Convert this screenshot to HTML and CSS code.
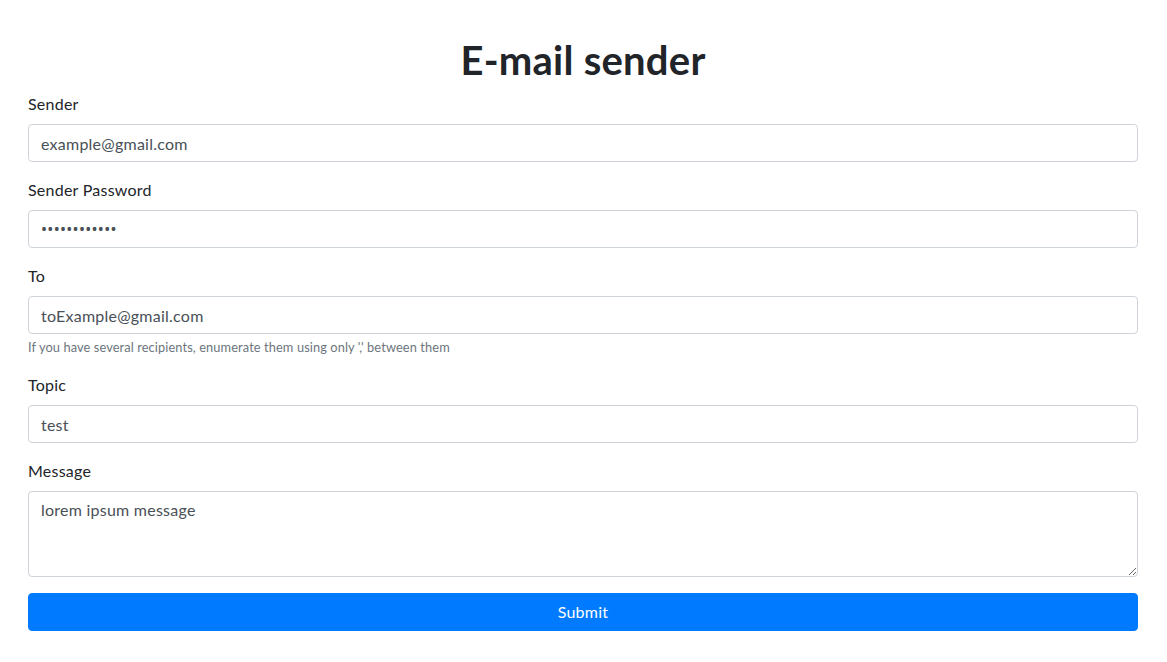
FILE: index.html
```html
<!DOCTYPE html>
<html lang="en">
<head>
<meta charset="utf-8">
<title>E-mail sender</title>
<link rel="stylesheet" href="styles.css">
</head>
<body>
<main class="container">
  <h1 class="title">E-mail sender</h1>
  <form class="form">
    <div class="form-group">
      <label class="label" for="sender">Sender</label>
      <input class="control" id="sender" type="email" value="example@gmail.com">
    </div>
    <div class="form-group">
      <label class="label" for="pass">Sender Password</label>
      <input class="control password" id="pass" type="password" value="abcdefghijkl">
    </div>
    <div class="form-group">
      <label class="label" for="to">To</label>
      <input class="control" id="to" type="text" value="toExample@gmail.com">
      <small class="form-text">If you have several recipients, enumerate them using only ',' between them</small>
    </div>
    <div class="form-group">
      <label class="label" for="topic">Topic</label>
      <input class="control" id="topic" type="text" value="test">
    </div>
    <div class="form-group">
      <label class="label" for="msg">Message</label>
      <textarea class="control area" id="msg" rows="3">lorem ipsum message</textarea>
    </div>
    <button class="btn" type="button">Submit</button>
  </form>
</main>
</body>
</html>
```
FILE: styles.css
```css
* { box-sizing: border-box; }
html, body { margin: 0; padding: 0; background: #fff; }
body {
  font-family: "Lato", "Noto Sans", sans-serif;
  font-size: 16px;
  line-height: 1.5;
  letter-spacing: 0.015em;
  color: #212529;
}
.container {
  padding: 36px 29px 0 28px;
}
.title {
  margin: 0 0 8px;
  font-size: 40px;
  font-weight: 700;
  line-height: 1.2;
  text-align: center;
}
.form { display: flex; flex-direction: column; }
.form-group { display: flex; flex-direction: column; margin-bottom: 16px; }
.label { display: block; margin-bottom: 8px; line-height: 24px; }
.control {
  display: block;
  width: 100%;
  height: 38px;
  padding: 6px 12px;
  font-family: inherit;
  font-size: 16px;
  line-height: 24px;
  letter-spacing: inherit;
  color: #495057;
  background: #fff;
  border: 1px solid #ced4da;
  border-radius: 4px;
  outline: none;
  margin: 0;
}
.password { font-family: "Noto Sans", sans-serif; letter-spacing: 0.3px; }
.area { height: 86px; resize: vertical; }
.form-text {
  display: block;
  margin-top: 4px;
  font-size: 12.8px;
  line-height: 19.2px;
  letter-spacing: 0.0085em;
  color: #6c757d;
}
.btn {
  display: block;
  width: 100%;
  height: 38px;
  padding: 6px 12px;
  font-family: inherit;
  font-size: 16px;
  line-height: 24px;
  letter-spacing: inherit;
  color: #fff;
  background: #007bff;
  border: 1px solid #007bff;
  border-radius: 4px;
  cursor: pointer;
}
```
